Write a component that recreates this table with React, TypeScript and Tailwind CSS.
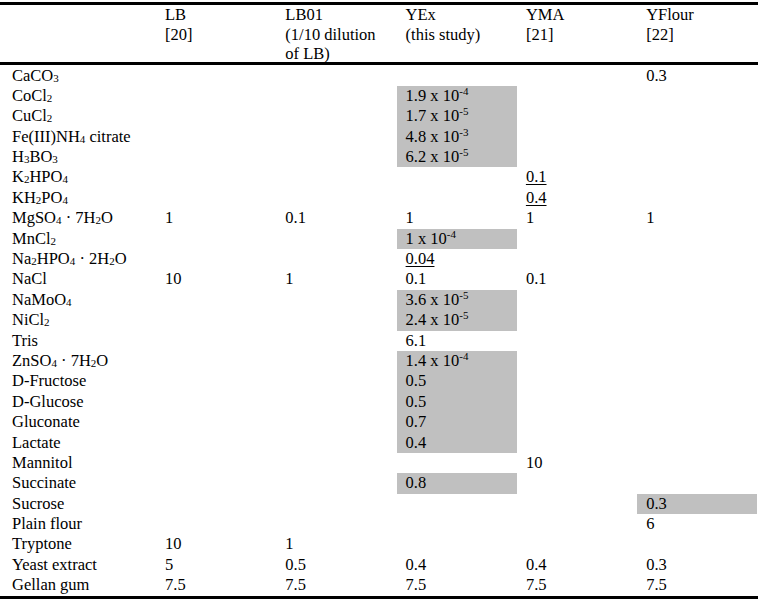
import React from "react"

type Cell = { v?: React.ReactNode; grey?: boolean; u?: boolean }

const S = ({ children }: { children: React.ReactNode }) => (
  <sub className="text-[11px] bottom-[-1px]">{children}</sub>
)

const P = ({ children }: { children: React.ReactNode }) => (
  <sup className="text-[11px] top-[-6px]">{children}</sup>
)

const e = (base: string, exp: string) => (
  <>
    {base} x 10<P>{exp}</P>
  </>
)

const rows: { name: React.ReactNode; cells: Cell[] }[] = [
  { name: <>CaCO<S>3</S></>, cells: [{}, {}, {}, {}, { v: "0.3" }] },
  { name: <>CoCl<S>2</S></>, cells: [{}, {}, { v: e("1.9", "-4"), grey: true }, {}, {}] },
  { name: <>CuCl<S>2</S></>, cells: [{}, {}, { v: e("1.7", "-5"), grey: true }, {}, {}] },
  { name: <>Fe(III)NH<S>4</S> citrate</>, cells: [{}, {}, { v: e("4.8", "-3"), grey: true }, {}, {}] },
  { name: <>H<S>3</S>BO<S>3</S></>, cells: [{}, {}, { v: e("6.2", "-5"), grey: true }, {}, {}] },
  { name: <>K<S>2</S>HPO<S>4</S></>, cells: [{}, {}, {}, { v: "0.1", u: true }, {}] },
  { name: <>KH<S>2</S>PO<S>4</S></>, cells: [{}, {}, {}, { v: "0.4", u: true }, {}] },
  { name: <>MgSO<S>4</S> · 7H<S>2</S>O</>, cells: [{ v: "1" }, { v: "0.1" }, { v: "1" }, { v: "1" }, { v: "1" }] },
  { name: <>MnCl<S>2</S></>, cells: [{}, {}, { v: <>1 x 10<P>-4</P></>, grey: true }, {}, {}] },
  { name: <>Na<S>2</S>HPO<S>4</S> · 2H<S>2</S>O</>, cells: [{}, {}, { v: "0.04", u: true }, {}, {}] },
  { name: "NaCl", cells: [{ v: "10" }, { v: "1" }, { v: "0.1" }, { v: "0.1" }, {}] },
  { name: <>NaMoO<S>4</S></>, cells: [{}, {}, { v: e("3.6", "-5"), grey: true }, {}, {}] },
  { name: <>NiCl<S>2</S></>, cells: [{}, {}, { v: e("2.4", "-5"), grey: true }, {}, {}] },
  { name: "Tris", cells: [{}, {}, { v: "6.1" }, {}, {}] },
  { name: <>ZnSO<S>4</S> · 7H<S>2</S>O</>, cells: [{}, {}, { v: e("1.4", "-4"), grey: true }, {}, {}] },
  { name: "D-Fructose", cells: [{}, {}, { v: "0.5", grey: true }, {}, {}] },
  { name: "D-Glucose", cells: [{}, {}, { v: "0.5", grey: true }, {}, {}] },
  { name: "Gluconate", cells: [{}, {}, { v: "0.7", grey: true }, {}, {}] },
  { name: "Lactate", cells: [{}, {}, { v: "0.4", grey: true }, {}, {}] },
  { name: "Mannitol", cells: [{}, {}, {}, { v: "10" }, {}] },
  { name: "Succinate", cells: [{}, {}, { v: "0.8", grey: true }, {}, {}] },
  { name: "Sucrose", cells: [{}, {}, {}, {}, { v: "0.3", grey: true }] },
  { name: "Plain flour", cells: [{}, {}, {}, {}, { v: "6" }] },
  { name: "Tryptone", cells: [{ v: "10" }, { v: "1" }, {}, {}, {}] },
  { name: "Yeast extract", cells: [{ v: "5" }, { v: "0.5" }, { v: "0.4" }, { v: "0.4" }, { v: "0.3" }] },
  { name: "Gellan gum", cells: [{ v: "7.5" }, { v: "7.5" }, { v: "7.5" }, { v: "7.5" }, { v: "7.5" }] },
]

const headers: string[][] = [
  ["LB", "[20]"],
  ["LB01", "(1/10 dilution", "of LB)"],
  ["YEx", "(this study)"],
  ["YMA", "[21]"],
  ["YFlour", "[22]"],
]

const cols = "grid grid-cols-[156px_repeat(5,120.3px)]"

export default function App() {
  return (
    <div className="w-[758px] h-[601px] bg-white text-black text-[16.5px] font-['Liberation_Serif','Times_New_Roman',serif] pt-[2px]">
      <div className="border-t-[3px] border-b-[3px] border-black">
        <div className={`${cols} h-[57px] leading-[19.5px]`}>
          <div />
          {headers.map((h, i) => (
            <div key={i} className="pl-[9px]">
              {h.map((line) => (
                <div key={line}>{line}</div>
              ))}
            </div>
          ))}
        </div>
      </div>

      <div className="pt-[0.5px] border-b-[3px] border-black">
        {rows.map((r, i) => (
          <div key={i} className={`${cols} h-[20.4px] leading-[20.4px]`}>
            <div className="pl-[12px] whitespace-nowrap">{r.name}</div>
            {r.cells.map((c, j) => (
              <div key={j} className={`pl-[9px] whitespace-nowrap ${c.grey ? "bg-[#c0c0c0]" : ""}`}>
                {c.u ? <span className="underline underline-offset-2">{c.v}</span> : c.v}
              </div>
            ))}
          </div>
        ))}
      </div>
    </div>
  )
}
